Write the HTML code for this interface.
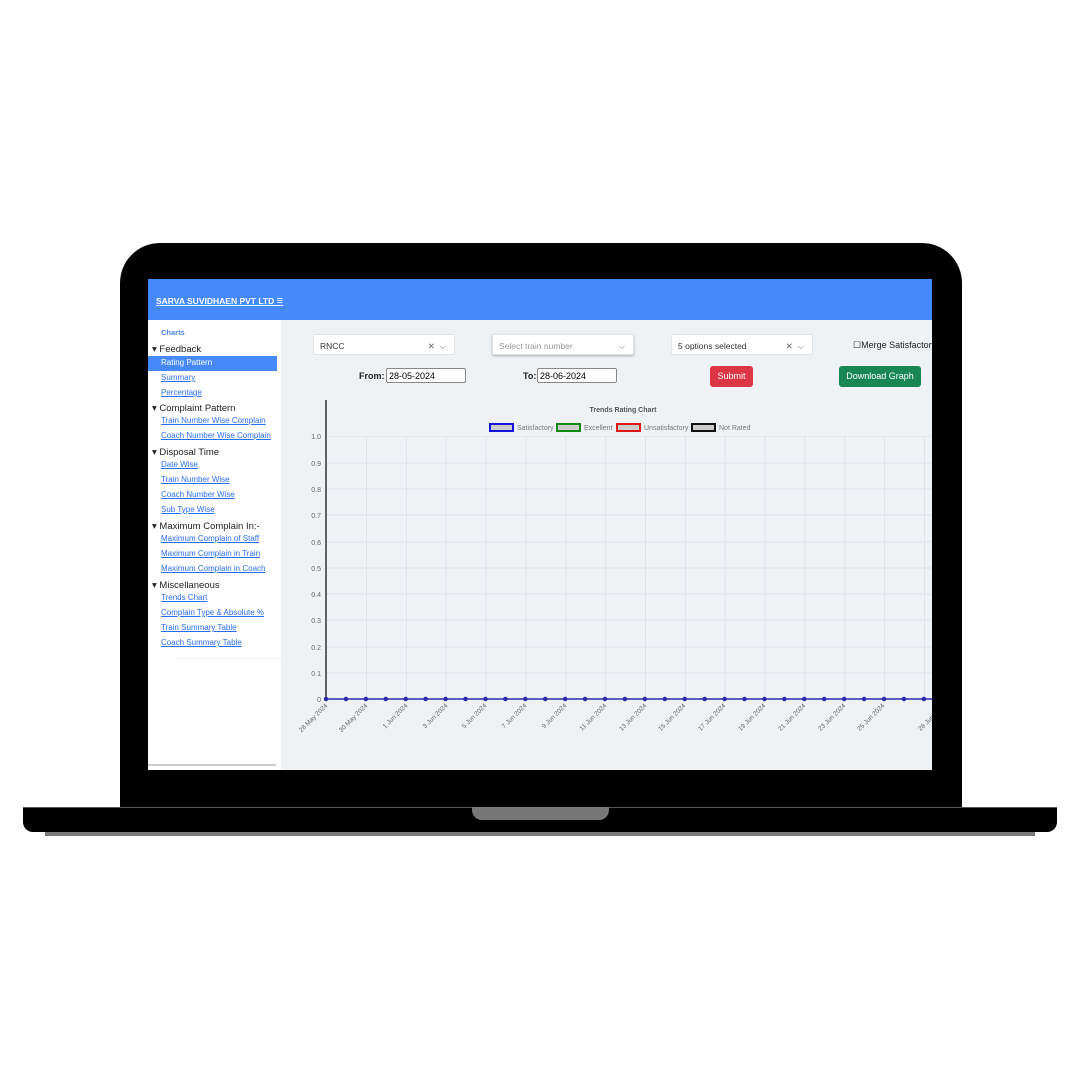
<!DOCTYPE html>
<html><head><meta charset="utf-8"><style>
*{margin:0;padding:0;box-sizing:border-box}
body{width:1080px;height:1080px;background:#fff;position:relative;overflow:hidden;font-family:"Liberation Sans",sans-serif}
.abs{position:absolute}
.side a{position:absolute;left:13px;font-size:8px;color:#2a6ef0;text-decoration:underline}
.side .h{position:absolute;left:4px;font-size:9.5px;color:#222}
.sel{position:absolute;background:#fff;border:1px solid #e2e5e8;border-radius:2px;font-size:8.5px;color:#333;padding:6px 6px;height:21px}
</style></head><body>
<div class="abs" style="left:120px;top:243px;width:842px;height:580px;background:#000;border-radius:40px 40px 0 0"></div>
<div class="abs" style="left:45px;top:830px;width:990px;height:6px;background:#7a7a7a"></div>
<div class="abs" style="left:23px;top:807px;width:1034px;height:25px;background:#000;border-radius:0 0 10px 10px;border-top:1px solid #555"></div>
<div class="abs" style="left:472px;top:807px;width:137px;height:13px;background:#777;border-radius:0 0 10px 10px"></div>

<div class="abs" style="left:148px;top:279px;width:784px;height:491px;background:#eef2f5;overflow:hidden">
 <div class="abs" style="left:0;top:0;width:784px;height:41px;background:#4589fb"></div>
 <div class="abs" style="left:8px;top:16px;font-size:8.5px;font-weight:bold;color:#fff;text-decoration:underline">SARVA SUVIDHAEN PVT LTD <span style="text-decoration:none;font-size:11px">&#8801;</span></div>
 <div class="side abs" style="left:0;top:41px;width:133px;height:450px;background:#fff">
  <div class="abs" style="left:13px;top:8px;font-size:7.5px;font-weight:bold;color:#4a86f0">Charts</div>
  <div class="h" style="top:24px">▾ Feedback</div>
  <div class="abs" style="left:0;top:36px;width:129px;height:15px;background:#4589fb"></div>
  <div class="abs" style="left:13px;top:38px;font-size:8px;color:#fff">Rating Pattern</div>
  <a style="top:53px">Summary</a><a style="top:68px">Percentage</a>
  <div class="h" style="top:83px">▾ Complaint Pattern</div>
  <a style="top:96px">Train Number Wise Complain</a><a style="top:111px">Coach Number Wise Complain</a>
  <div class="h" style="top:127px">▾ Disposal Time</div>
  <a style="top:140px">Date Wise</a><a style="top:155px">Train Number Wise</a><a style="top:170px">Coach Number Wise</a><a style="top:185px">Sub Type Wise</a>
  <div class="h" style="top:201px">▾ Maximum Complain In:-</div>
  <a style="top:214px">Maximum Complain of Staff</a><a style="top:229px">Maximum Complain in Train</a><a style="top:244px">Maximum Complain in Coach</a>
  <div class="h" style="top:260px">▾ Miscellaneous</div>
  <a style="top:273px">Trends Chart</a><a style="top:288px">Complain Type &amp; Absolute %</a><a style="top:303px">Train Summary Table</a><a style="top:318px">Coach Summary Table</a>
  <div class="abs" style="left:28px;top:338px;width:105px;height:1px;background:#eee"></div>
  <div class="abs" style="left:0;top:444px;width:128px;height:2px;background:#ccc"></div>
 </div>
 <div class="sel" style="left:165px;top:55px;width:142px">RNCC<span style="position:absolute;right:8px;color:#666">✕ &nbsp;⌵</span></div>
 <div class="sel" style="left:344px;top:55px;width:142px;color:#999;box-shadow:0 1px 2px #aaa">Select train number<span style="position:absolute;right:8px;color:#666">⌵</span></div>
 <div class="sel" style="left:523px;top:55px;width:142px">5 options selected<span style="position:absolute;right:8px;color:#666">✕ &nbsp;⌵</span></div>
 <div class="abs" style="left:705px;top:61px;font-size:9px;color:#222;white-space:nowrap">☐Merge Satisfactory</div>
 <div class="abs" style="left:211px;top:92px;font-size:9px;font-weight:bold;color:#222">From:</div>
 <div class="abs" style="left:238px;top:89px;width:80px;height:15px;background:#fff;border:1px solid #888;border-radius:2px;font-size:9px;padding:2px 2px">28-05-2024</div>
 <div class="abs" style="left:375px;top:92px;font-size:9px;font-weight:bold;color:#222">To:</div>
 <div class="abs" style="left:389px;top:89px;width:80px;height:15px;background:#fff;border:1px solid #888;border-radius:2px;font-size:9px;padding:2px 2px">28-06-2024</div>
 <div class="abs" style="left:562px;top:87px;width:43px;height:21px;background:#dc3545;border-radius:3px;color:#fff;font-size:9px;text-align:center;line-height:21px">Submit</div>
 <div class="abs" style="left:691px;top:87px;width:82px;height:21px;background:#198754;border-radius:3px;color:#fff;font-size:9px;text-align:center;line-height:21px">Download Graph</div>
</div>

<svg class="abs" style="left:0;top:0" width="1080" height="1080" viewBox="0 0 1080 1080">
 <defs><clipPath id="c"><rect x="282" y="390" width="650" height="380"/></clipPath></defs>
 <g clip-path="url(#c)" font-family="Liberation Sans,sans-serif">
 <g stroke="#dde2e7" stroke-width="1">
  <line x1="326" x2="940" y1="436" y2="436"/><line x1="326" x2="940" y1="463" y2="463"/><line x1="326" x2="940" y1="489" y2="489"/><line x1="326" x2="940" y1="515" y2="515"/><line x1="326" x2="940" y1="542" y2="542"/><line x1="326" x2="940" y1="568" y2="568"/><line x1="326" x2="940" y1="594" y2="594"/><line x1="326" x2="940" y1="620" y2="620"/><line x1="326" x2="940" y1="647" y2="647"/><line x1="326" x2="940" y1="673" y2="673"/>
  <line x1="366" x2="1000" y1="568" y2="568" stroke-width="264" stroke-dasharray="1 38.86" stroke="#e0e4e8"/>
 </g>
 <rect x="282" y="400" width="40" height="310" fill="#eef2f5"/>
 <rect x="326" y="400" width="620" height="36" fill="#eef2f5"/>
 <line x1="326" y1="400" x2="326" y2="700" stroke="#333" stroke-width="1.5"/>
 <line x1="326" y1="699" x2="940" y2="699" stroke="#2b2bb0" stroke-width="1.5"/>
 <line x1="326" y1="699" x2="960" y2="699" stroke="#2b2baa" stroke-width="4.5" stroke-linecap="round" stroke-dasharray="0 19.93"/>
 <g font-size="7" fill="#666" text-anchor="end">
  <text x="321" y="439">1.0</text><text x="321" y="466">0.9</text><text x="321" y="492">0.8</text><text x="321" y="518">0.7</text><text x="321" y="545">0.6</text><text x="321" y="571">0.5</text><text x="321" y="597">0.4</text><text x="321" y="623">0.3</text><text x="321" y="650">0.2</text><text x="321" y="676">0.1</text><text x="321" y="702">0</text>
 </g>
 <g font-size="6.5" fill="#666" text-anchor="end">
  <text transform="translate(328,706) rotate(-45)">28 May 2024</text>
  <text transform="translate(368,706) rotate(-45)">30 May 2024</text>
  <text transform="translate(408,706) rotate(-45)">1 Jun 2024</text>
  <text transform="translate(448,706) rotate(-45)">3 Jun 2024</text>
  <text transform="translate(487,706) rotate(-45)">5 Jun 2024</text>
  <text transform="translate(527,706) rotate(-45)">7 Jun 2024</text>
  <text transform="translate(567,706) rotate(-45)">9 Jun 2024</text>
  <text transform="translate(607,706) rotate(-45)">11 Jun 2024</text>
  <text transform="translate(647,706) rotate(-45)">13 Jun 2024</text>
  <text transform="translate(686,706) rotate(-45)">15 Jun 2024</text>
  <text transform="translate(726,706) rotate(-45)">17 Jun 2024</text>
  <text transform="translate(766,706) rotate(-45)">19 Jun 2024</text>
  <text transform="translate(806,706) rotate(-45)">21 Jun 2024</text>
  <text transform="translate(846,706) rotate(-45)">23 Jun 2024</text>
  <text transform="translate(885,706) rotate(-45)">25 Jun 2024</text>
  <text transform="translate(946,706) rotate(-45)">28 Jun 2024</text>
 </g>
 <text x="623" y="412" font-size="7" font-weight="bold" fill="#555" text-anchor="middle">Trends Rating Chart</text>
 <g font-size="7" fill="#777" stroke-width="2">
  <rect x="490" y="424" width="23" height="7" fill="#ccc" stroke="#1515e0"/><text x="517" y="430">Satisfactory</text>
  <rect x="557" y="424" width="23" height="7" fill="#ccc" stroke="#138a13"/><text x="584" y="430">Excellent</text>
  <rect x="617" y="424" width="23" height="7" fill="#ccc" stroke="#e01515"/><text x="644" y="430">Unsatisfactory</text>
  <rect x="692" y="424" width="23" height="7" fill="#ccc" stroke="#111"/><text x="719" y="430">Not Rated</text>
 </g>
 </g>
</svg>
</body></html>
